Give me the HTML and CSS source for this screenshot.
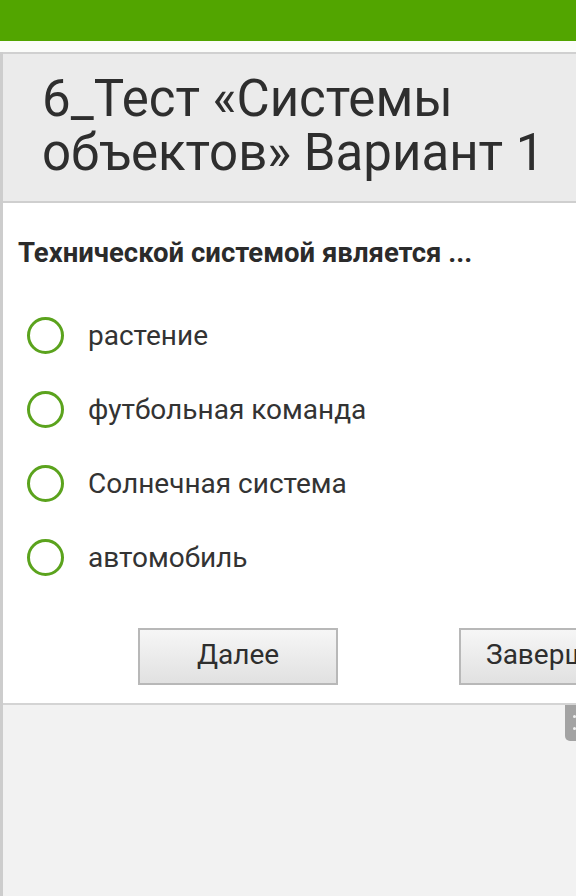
FILE: index.html
```html
<!DOCTYPE html>
<html lang="ru">
<head>
<meta charset="utf-8">
<link rel="stylesheet" href="styles.css">
</head>
<body>
<div class="topbar"></div>
<div class="gap"></div>
<div class="page">
  <div class="header">
    <h1 class="title">6_Тест «Системы объектов» Вариант 1</h1>
  </div>
  <div class="content">
    <div class="question">Технической системой является ...</div>
    <ul class="options">
      <li class="option"><span class="radio"></span><span class="label">растение</span></li>
      <li class="option"><span class="radio"></span><span class="label">футбольная команда</span></li>
      <li class="option"><span class="radio"></span><span class="label">Солнечная система</span></li>
      <li class="option"><span class="radio"></span><span class="label">автомобиль</span></li>
    </ul>
    <div class="buttons">
      <button class="btn btn-next">Далее</button>
      <button class="btn btn-finish">Завершить</button>
    </div>
  </div>
  <div class="footer">
    <div class="side-tab"><span></span><span></span></div>
  </div>
</div>
</body>
</html>
```

FILE: styles.css
```css
html, body {
  margin: 0;
  padding: 0;
}
body {
  width: 576px;
  height: 896px;
  overflow: hidden;
  background: #f2f2f2;
  font-family: Roboto, "Noto Sans", sans-serif;
  color: #333;
}
.topbar {
  height: 41px;
  background: #52a500;
}
.gap {
  height: 11px;
  background: #fbfcfa;
}
.page {
  border-left: 3px solid #cdcdcd;
  display: flex;
  flex-direction: column;
  width: 640px;
}
.header {
  background: #ebebeb;
  border-top: 2px solid #d0d0d0;
  border-bottom: 2px solid #cfcfcf;
  height: 147px;
  box-sizing: content-box;
  padding-left: 39px;
}
.title {
  margin: 0;
  padding-top: 18px;
  font-size: 51px;
  line-height: 54px;
  font-weight: 400;
  color: #2e2e2e;
  width: 540px;
}
.content {
  background: #fff;
  border-bottom: 2px solid #d4d4d4;
  height: 502px;
  box-sizing: border-box;
  padding-top: 34px;
}
.question {
  padding-left: 15px;
  font-size: 27.5px;
  line-height: 32px;
  font-weight: 700;
  color: #2b2b2b;
}
.options {
  list-style: none;
  margin: 29px 0 0 0;
  padding: 0 0 0 24px;
}
.option {
  display: flex;
  align-items: center;
  height: 74px;
}
.radio {
  width: 37px;
  height: 37px;
  border: 3.5px solid #5ba31d;
  border-radius: 50%;
  box-sizing: border-box;
  flex: none;
}
.label {
  margin-left: 24px;
  font-size: 28px;
  color: #333;
}
.buttons {
  display: flex;
  gap: 121px;
  padding-left: 135px;
  margin-top: 34px;
}
.btn {
  width: 200px;
  height: 57px;
  border: 2px solid #b8b8b8;
  background: linear-gradient(#f6f6f6, #e1e1e1);
  font-family: Roboto, "Noto Sans", sans-serif;
  font-size: 28px;
  color: #2e2e2e;
  padding: 0 0 4px 0;
  flex: none;
}
.btn-finish {
  width: 200px;
  text-align: left;
  padding-left: 25px;
}
.footer {
  position: relative;
  height: 200px;
  background: #f2f2f2;
}
.side-tab {
  position: absolute;
  left: 562px;
  top: 0;
  width: 14px;
  height: 36px;
  background: #a3a3a3;
  border-bottom-left-radius: 5px;
}
.side-tab span {
  position: absolute;
  left: 8px;
  width: 3px;
  height: 3px;
  background: #f0f0f0;
  border-radius: 50%;
}
.side-tab span:first-child { top: 10px; }
.side-tab span:last-child { top: 22px; }
```
